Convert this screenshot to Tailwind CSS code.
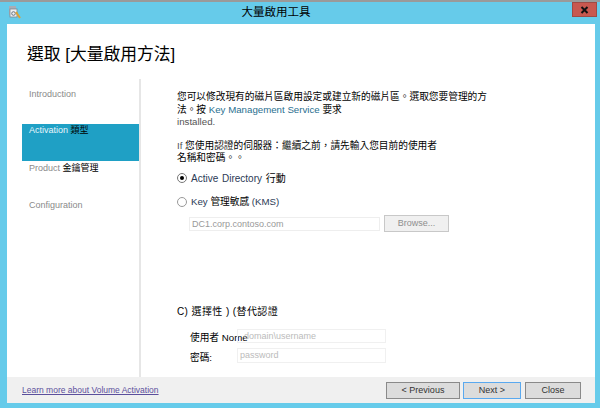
<!DOCTYPE html>
<html lang="zh-Hant">
<head>
  <meta charset="UTF-8">
  <title>大量啟用工具</title>
  <script src="https://cdn.jsdelivr.net/npm/@tailwindcss/browser@4"></script>
</head>
<body class="w-[600px] h-[408px] overflow-hidden bg-[#66cbea] font-['Liberation_Sans','Noto_Sans_CJK_TC',sans-serif]">
  <div class="h-[2px] bg-[#9a9a9a]"></div>
  <!-- title bar -->
  <div class="relative h-[22px] flex items-center justify-center pr-[48px] text-[11.5px] text-black">
    <svg class="absolute left-[8px] top-[4px]" width="13" height="13" viewBox="0 0 13 13">
      <rect x="1" y="0" width="7" height="9" fill="#a9adb6" />
      <rect x="2" y="3" width="7" height="8" fill="#eef0f2" stroke="#7f8590" stroke-width="0.8" />
      <circle cx="5.5" cy="7.5" r="1.8" fill="none" stroke="#6b7280" stroke-width="1" />
      <path d="M8 6l4 6" stroke="#e0a030" stroke-width="2" />
    </svg>
    <span>大量啟用工具</span>
    <div class="absolute right-[3px] top-0 w-[25px] h-[15px] bg-[#c8584f] border border-[#a04a44] flex items-center justify-center">
      <svg width="9" height="8" viewBox="0 0 9 8"><path d="M1.5 1l6 6M7.5 1l-6 6" stroke="#111" stroke-width="2" /></svg>
    </div>
  </div>
  <!-- window -->
  <div class="ml-[7px] mr-[5px] h-[379px] flex flex-col bg-white">
    <div class="h-[55px] pl-[20px] pt-[20px] text-[16.8px] leading-[22px] text-black">選取 [大量啟用方法]</div>
    <div class="h-[298px] flex">
      <!-- sidebar -->
      <div class="w-[134px] shrink-0 border-r-2 border-[#e6e6e6] pl-[15px] text-[9px] text-[#8a8a8a]">
        <div class="h-[45px] pl-[7px] pt-[9px]">Introduction</div>
        <div class="h-[37px] pl-[7px] bg-[#1fa0c5] text-[#e8f6fb]">Activation <span class="text-black">類型</span></div>
        <div class="h-[37px] pl-[7px] pt-[1px]">Product <span class="text-black">金鑰管理</span></div>
        <div class="pl-[7px] pt-[1px]">Configuration</div>
      </div>
      <!-- main panel -->
      <div class="flex-1 pl-[36px] pt-[12px] text-[9.7px] text-black">
        <p class="whitespace-nowrap leading-[12.5px]">您可以修改現有的磁片區啟用設定或建立新的磁片區。選取您要管理的方<br>法。按 <span class="text-[#2a6f8f]">Key Management Service</span> 要求<br><span class="text-[#555]">installed.</span></p>
        <p class="whitespace-nowrap mt-[11px] leading-[12.5px]"><span class="text-[#555]">If</span> 您使用認證的伺服器：繼續之前，請先輸入您目前的使用者<br>名稱和密碼。。</p>
        <div class="mt-[6px] flex items-center gap-[4px] text-[10px]">
          <span class="w-[10px] h-[10px] rounded-full border border-[#777] flex items-center justify-center"><span class="w-[4px] h-[4px] rounded-full bg-black"></span></span>
          <span class="text-[#2b3a55] [word-spacing:1px]">Active Directory <span class="text-black">行動</span></span>
        </div>
        <div class="mt-[9px] flex items-center gap-[4px]">
          <span class="w-[10px] h-[10px] rounded-full border border-[#999]"></span>
          <span class="text-[#2b3a55]">Key <span class="text-black">管理敏感</span> (KMS)</span>
        </div>
        <div class="mt-[6px] ml-[12px] flex items-center gap-[4px]">
          <div class="w-[191px] h-[14px] border border-[#eeeeee] pl-[2px] text-[9px] leading-[12px] text-[#999]">DC1.corp.contoso.com</div>
          <div class="w-[65px] h-[17px] bg-[#f0f0f0] border border-[#c8c8c8] text-center text-[9px] leading-[15px] text-[#8e8e8e]">Browse...</div>
        </div>
        <div class="mt-[73px] text-[10px] leading-[14px] tracking-[0.4px]">C) 選擇性 ) (替代認證</div>
        <div class="mt-[10px] ml-[13px] flex items-start h-[15px]">
          <span class="w-[47px] pt-[2px] leading-[14px] whitespace-nowrap">使用者 Nome</span>
          <div class="w-[149px] h-[14px] border border-[#f0f0f0] pl-[6px] text-[9px] leading-[12px] text-[#bbb]">domain\username</div>
        </div>
        <div class="mt-[4px] ml-[13px] flex items-start h-[15px]">
          <span class="w-[47px] pt-[3px] leading-[14px]">密碼:</span>
          <div class="w-[149px] h-[15px] border border-[#f0f0f0] pl-[2px] text-[9px] leading-[13px] text-[#bbb]">password</div>
        </div>
      </div>
    </div>
    <!-- footer -->
    <div class="h-[26px] bg-[#f0f0f0] flex items-center justify-between pl-[15px] pr-[14px] text-[9px]">
      <a class="underline text-[#5b4f9c] text-[8.5px]">Learn more about Volume Activation</a>
      <div class="flex gap-[3px] text-[#333]">
        <button class="w-[74px] h-[17px] bg-[#dcdcdc] border border-[#8a8a8a] leading-[15px]">&lt; Previous</button>
        <button class="w-[58px] h-[17px] bg-[#dcdcdc] border border-[#5aa9ef] leading-[15px]">Next &gt;</button>
        <button class="w-[56px] h-[17px] bg-[#dcdcdc] border border-[#8a8a8a] leading-[15px] ml-[1px]">Close</button>
      </div>
    </div>
  </div>
</body>
</html>
